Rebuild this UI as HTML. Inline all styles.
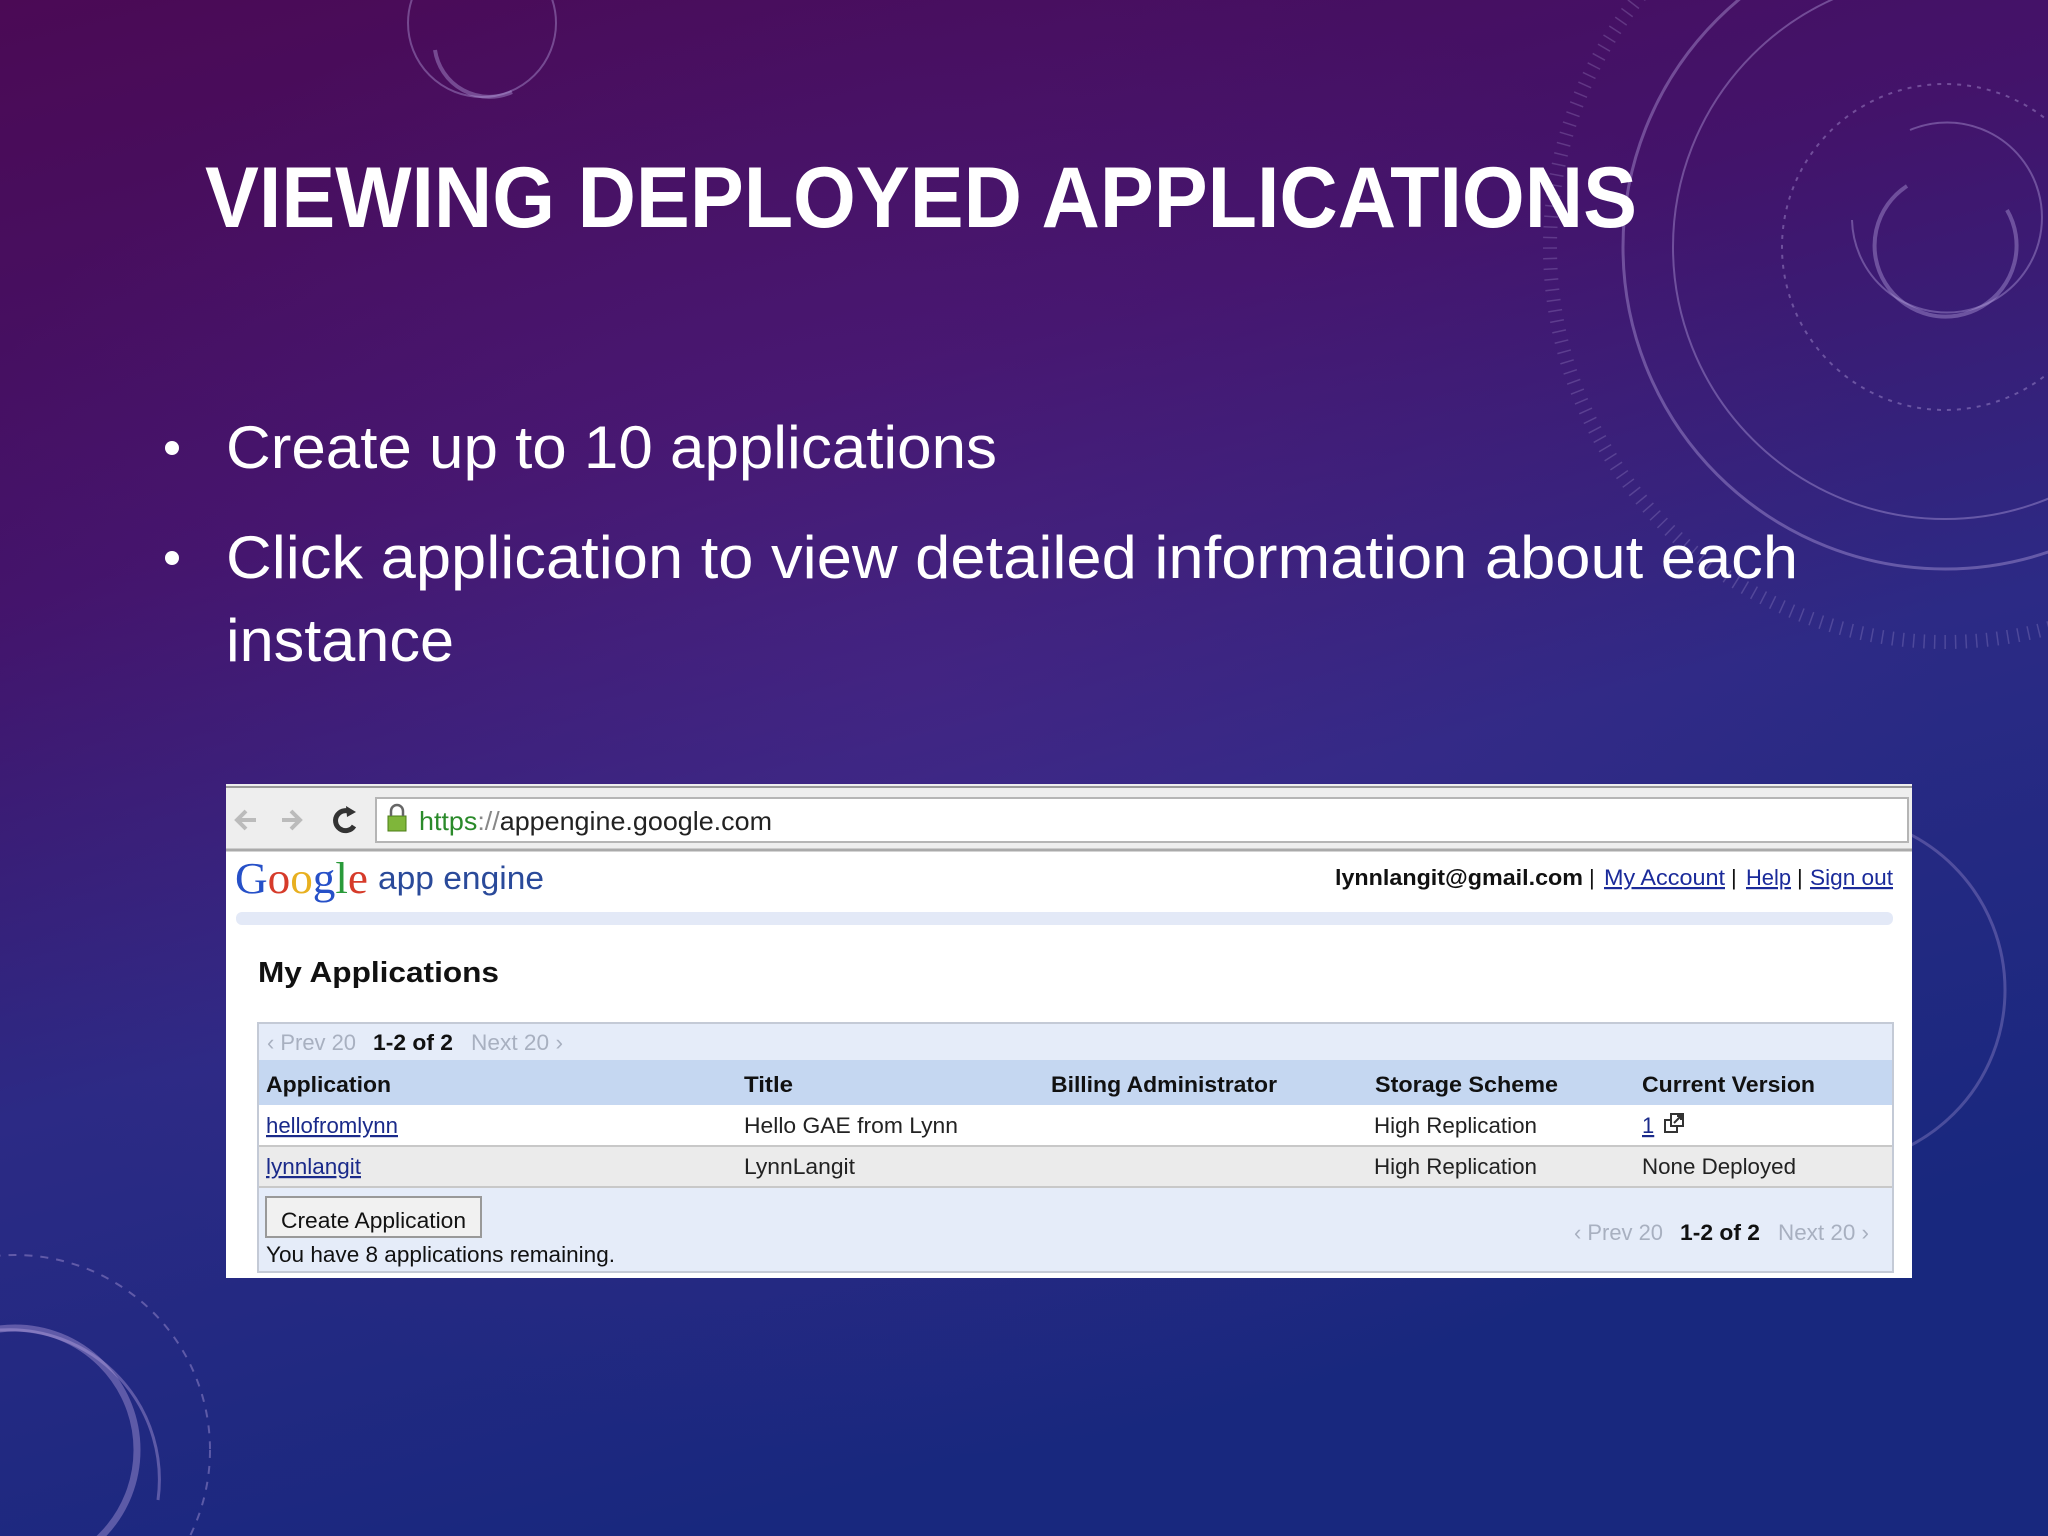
<!DOCTYPE html>
<html><head><meta charset="utf-8"><style>html,body{margin:0;padding:0;background:#3a0f5a;width:2048px;height:1536px;overflow:hidden}svg{display:block}</style></head><body>
<svg width="2048" height="1536" viewBox="0 0 2048 1536" xmlns="http://www.w3.org/2000/svg" font-family="Liberation Sans, sans-serif">
<defs>
<linearGradient id="bg" x1="0" y1="0" x2="0.35" y2="1">
<stop offset="0" stop-color="#4b0a55"/>
<stop offset="0.35" stop-color="#43136a"/>
<stop offset="0.65" stop-color="#2c2a85"/>
<stop offset="1" stop-color="#18287e"/>
</linearGradient>
<radialGradient id="glow" cx="0.45" cy="0.45" r="0.5">
<stop offset="0" stop-color="#5a2a90" stop-opacity="0.35"/>
<stop offset="1" stop-color="#5a2a90" stop-opacity="0"/>
</radialGradient>
</defs>
<rect width="2048" height="1536" fill="url(#bg)"/>
<rect width="2048" height="1536" fill="url(#glow)"/>
<g fill="none" stroke="#b9a6e0" stroke-opacity="0.4">
<circle cx="482" cy="23" r="74" stroke-width="2"/>
<path d="M435 50 A55 55 0 0 0 512 92" stroke-width="4"/>
<circle cx="1945" cy="247" r="322" stroke-width="3"/>
<circle cx="1945" cy="247" r="272" stroke-width="2"/>
<circle cx="1945" cy="247" r="395" stroke-width="14" stroke-dasharray="1.5 9" stroke-opacity="0.25"/>
<circle cx="1945" cy="247" r="163" stroke-width="2" stroke-dasharray="4 6"/>
<path d="M1907 186 A71 71 0 1 0 2007 210" stroke-width="4"/>
<path d="M1910 130 A95 95 0 1 1 1852 220" stroke-width="2"/>
<circle cx="1830" cy="990" r="175" stroke-width="3" stroke-opacity="0.3"/>
<circle cx="15" cy="1450" r="122" stroke-width="7"/>
<path d="M0 1330 A150 150 0 0 1 158 1500" stroke-width="3"/>
<circle cx="15" cy="1450" r="195" stroke-width="2" stroke-dasharray="8 8"/>
</g>
<text x="205" y="227" fill="#fff" font-size="86" font-weight="bold" textLength="1432" lengthAdjust="spacingAndGlyphs">VIEWING DEPLOYED APPLICATIONS</text>
<g fill="#fff" font-size="60">
<circle cx="172" cy="448" r="7"/>
<text x="226" y="468" textLength="771" lengthAdjust="spacingAndGlyphs">Create up to 10 applications</text>
<circle cx="172" cy="558" r="7"/>
<text x="226" y="578" textLength="1572" lengthAdjust="spacingAndGlyphs">Click application to view detailed information about each</text>
<text x="226" y="661" textLength="228" lengthAdjust="spacingAndGlyphs">instance</text>
</g>
<rect x="226" y="784" width="1686" height="494" fill="#fff"/>
<rect x="226" y="784" width="1686" height="66" fill="#eeeeee"/>
<line x1="226" y1="787" x2="1912" y2="787" stroke="#999" stroke-width="2"/>
<rect x="376" y="798" width="1532" height="44" fill="#fff" stroke="#b5b5b5" stroke-width="2"/>
<line x1="226" y1="850" x2="1912" y2="850" stroke="#aaa" stroke-width="3"/>
<g fill="none" stroke="#bbb" stroke-width="4">
<path d="M256 820 h-18 M246 811 l-9 9 9 9"/>
<path d="M282 820 h18 M291 811 l9 9 -9 9"/>
</g>
<path d="M352 813 A10 10 0 1 0 354 826" fill="none" stroke="#333" stroke-width="5"/>
<path d="M346 806 l10 6 -9 5z" fill="#333"/>
<rect x="388" y="816" width="18" height="15" fill="#7fb63a" stroke="#4b7d16"/>
<path d="M391 816 v-5 a6 6 0 0 1 12 0 v5" fill="none" stroke="#666" stroke-width="2.5"/>
<text x="419" y="830" font-size="26" fill="#222" textLength="353" lengthAdjust="spacingAndGlyphs"><tspan fill="#2a8a2a">https</tspan><tspan fill="#888">://</tspan>appengine.google.com</text>
<text x="235" y="893" font-size="44" font-family="Liberation Serif, serif" textLength="133" lengthAdjust="spacingAndGlyphs"><tspan fill="#2650c8">G</tspan><tspan fill="#d63b2a">o</tspan><tspan fill="#e8b020">o</tspan><tspan fill="#2650c8">g</tspan><tspan fill="#2a9a3a">l</tspan><tspan fill="#d63b2a">e</tspan></text>
<text x="378" y="889" font-size="32" fill="#2a4a9a" textLength="166" lengthAdjust="spacingAndGlyphs">app engine</text>
<g font-size="22">
<text x="1335" y="885" font-weight="bold" fill="#111" textLength="248" lengthAdjust="spacingAndGlyphs">lynnlangit@gmail.com</text>
<text x="1589" y="885" fill="#111">|</text>
<text x="1604" y="885" fill="#1a2a9a" text-decoration="underline" textLength="121" lengthAdjust="spacingAndGlyphs">My Account</text>
<text x="1731" y="885" fill="#111">|</text>
<text x="1746" y="885" fill="#1a2a9a" text-decoration="underline" textLength="45" lengthAdjust="spacingAndGlyphs">Help</text>
<text x="1797" y="885" fill="#111">|</text>
<text x="1810" y="885" fill="#1a2a9a" text-decoration="underline" textLength="83" lengthAdjust="spacingAndGlyphs">Sign out</text>
</g>
<rect x="236" y="912" width="1657" height="13" rx="6" fill="#e3e9f7"/>
<text x="258" y="982" font-size="29" font-weight="bold" fill="#111" textLength="241" lengthAdjust="spacingAndGlyphs">My Applications</text>
<rect x="258" y="1023" width="1635" height="249" fill="#e5ecf9" stroke="#c4cad6" stroke-width="2"/>
<rect x="259" y="1060" width="1633" height="45" fill="#c5d7f1"/>
<rect x="259" y="1105" width="1633" height="41" fill="#fff"/>
<rect x="259" y="1146" width="1633" height="41" fill="#ebebeb"/>
<g stroke="#c8c8c8" stroke-width="2"><line x1="259" y1="1146" x2="1892" y2="1146"/><line x1="259" y1="1187" x2="1892" y2="1187"/></g>
<g font-size="22">
<text x="267" y="1050" fill="#a8b0c0" textLength="89" lengthAdjust="spacingAndGlyphs">‹ Prev 20</text>
<text x="373" y="1050" fill="#111" font-weight="bold" textLength="80" lengthAdjust="spacingAndGlyphs">1-2 of 2</text>
<text x="471" y="1050" fill="#a8b0c0" textLength="92" lengthAdjust="spacingAndGlyphs">Next 20 ›</text>
<g font-weight="bold" fill="#111">
<text x="266" y="1092" textLength="125" lengthAdjust="spacingAndGlyphs">Application</text>
<text x="744" y="1092" textLength="49" lengthAdjust="spacingAndGlyphs">Title</text>
<text x="1051" y="1092" textLength="226" lengthAdjust="spacingAndGlyphs">Billing Administrator</text>
<text x="1375" y="1092" textLength="183" lengthAdjust="spacingAndGlyphs">Storage Scheme</text>
<text x="1642" y="1092" textLength="173" lengthAdjust="spacingAndGlyphs">Current Version</text>
</g>
<text x="266" y="1133" fill="#1a2a8a" text-decoration="underline" textLength="132" lengthAdjust="spacingAndGlyphs">hellofromlynn</text>
<text x="744" y="1133" fill="#222" textLength="214" lengthAdjust="spacingAndGlyphs">Hello GAE from Lynn</text>
<text x="1374" y="1133" fill="#222" textLength="163" lengthAdjust="spacingAndGlyphs">High Replication</text>
<text x="1642" y="1133" fill="#1a2a8a" text-decoration="underline">1</text>
<g fill="none" stroke="#333" stroke-width="2"><rect x="1665" y="1120" width="12" height="12"/><rect x="1671" y="1114" width="12" height="12" fill="#fff"/><path d="M1674 1123 l7 -7 M1677 1116 h4 v4"/></g>
<text x="266" y="1174" fill="#1a2a8a" text-decoration="underline" textLength="95" lengthAdjust="spacingAndGlyphs">lynnlangit</text>
<text x="744" y="1174" fill="#222" textLength="111" lengthAdjust="spacingAndGlyphs">LynnLangit</text>
<text x="1374" y="1174" fill="#222" textLength="163" lengthAdjust="spacingAndGlyphs">High Replication</text>
<text x="1642" y="1174" fill="#222" textLength="154" lengthAdjust="spacingAndGlyphs">None Deployed</text>
</g>
<rect x="266" y="1197" width="215" height="40" fill="#f1f1f1" stroke="#999" stroke-width="2"/>
<g font-size="22">
<text x="281" y="1228" fill="#111" textLength="185" lengthAdjust="spacingAndGlyphs">Create Application</text>
<text x="266" y="1262" fill="#111" textLength="349" lengthAdjust="spacingAndGlyphs">You have 8 applications remaining.</text>
<text x="1574" y="1240" fill="#a8b0c0" textLength="89" lengthAdjust="spacingAndGlyphs">‹ Prev 20</text>
<text x="1680" y="1240" fill="#111" font-weight="bold" textLength="80" lengthAdjust="spacingAndGlyphs">1-2 of 2</text>
<text x="1778" y="1240" fill="#a8b0c0" textLength="91" lengthAdjust="spacingAndGlyphs">Next 20 ›</text>
</g>
</svg>
</body></html>
